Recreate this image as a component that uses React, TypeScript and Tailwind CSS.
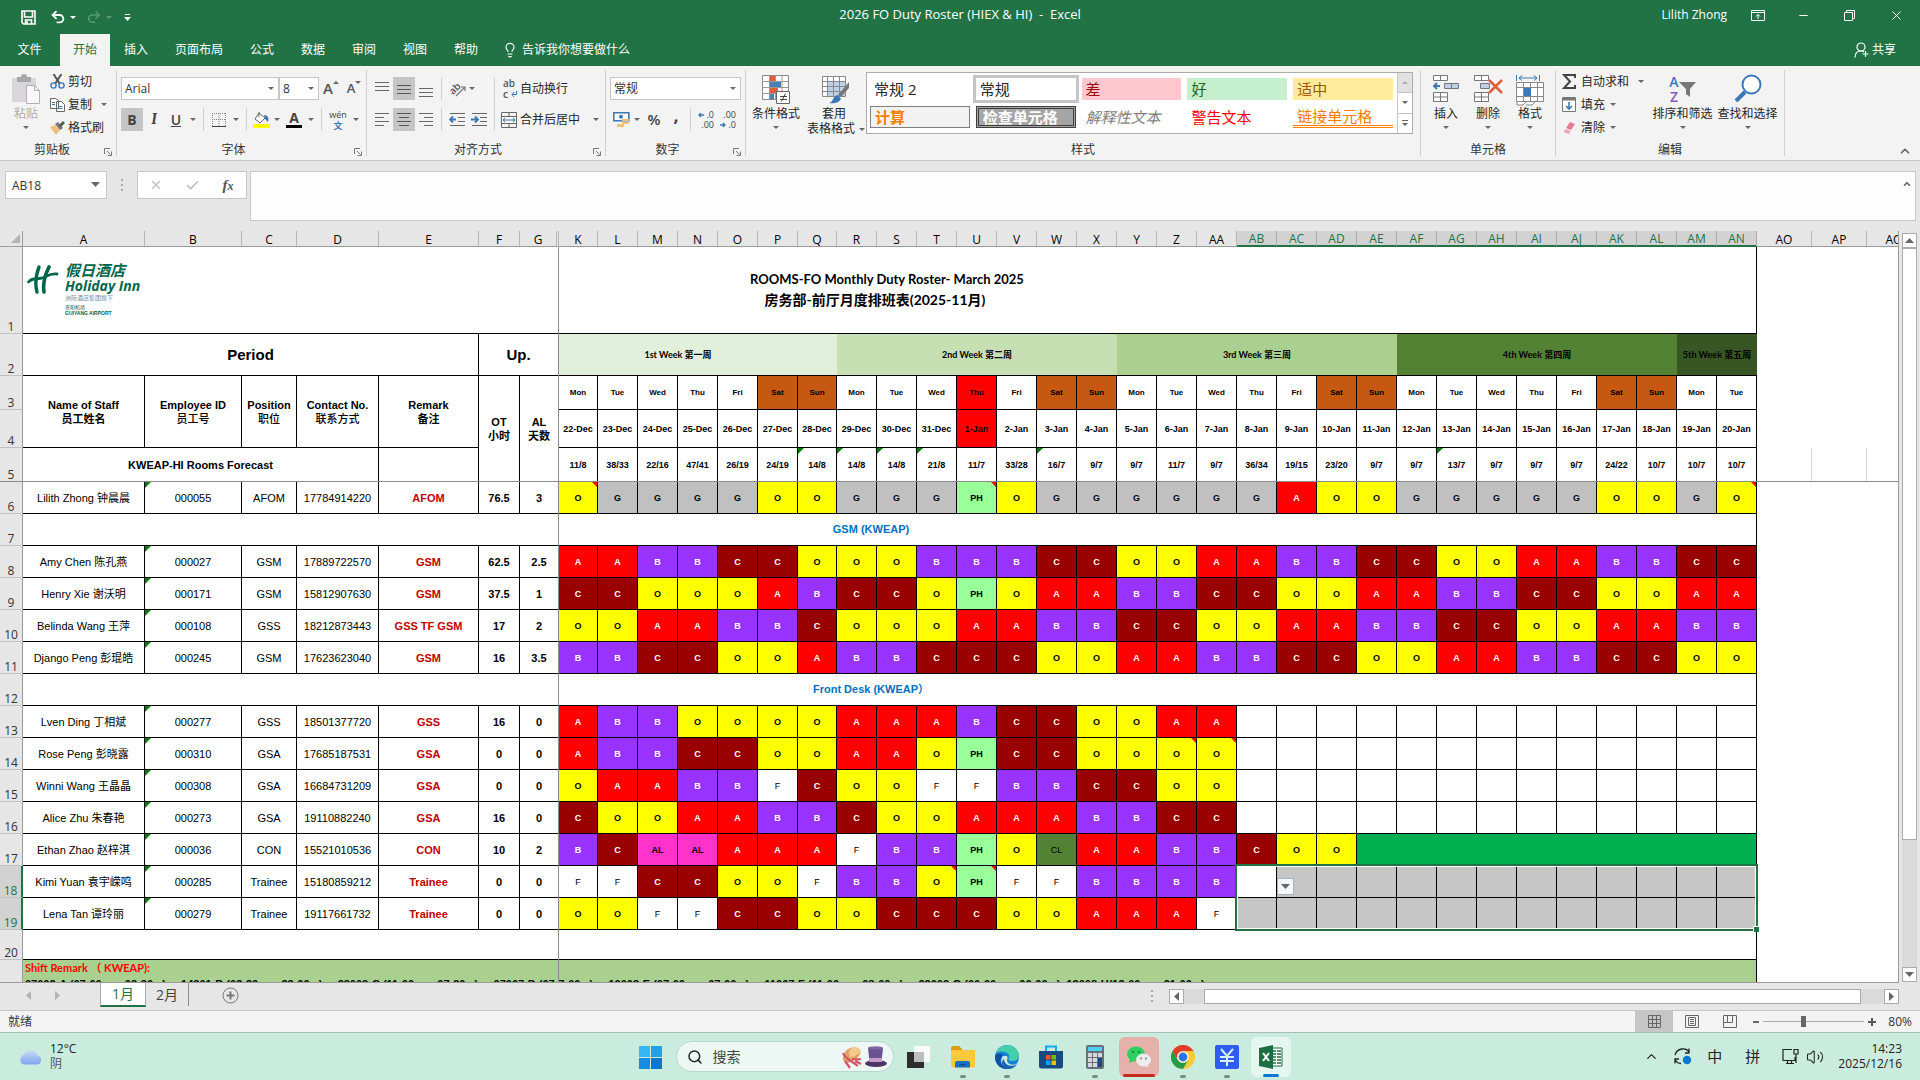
import React from 'react';
import { Undo2, Redo2, Minus, X, Lightbulb, ChevronUp, Search, Check, Volume2 } from 'lucide-react';

/* ---------- roster data ---------- */

const DAYS = ['Mon', 'Tue', 'Wed', 'Thu', 'Fri', 'Sat', 'Sun'];

const DATES = [
  '22-Dec', '23-Dec', '24-Dec', '25-Dec', '26-Dec', '27-Dec', '28-Dec', '29-Dec', '30-Dec', '31-Dec',
  '1-Jan', '2-Jan', '3-Jan', '4-Jan', '5-Jan', '6-Jan', '7-Jan', '8-Jan', '9-Jan', '10-Jan',
  '11-Jan', '12-Jan', '13-Jan', '14-Jan', '15-Jan', '16-Jan', '17-Jan', '18-Jan', '19-Jan', '20-Jan',
];

const FORECAST =
  '11/8 38/33 22/16 47/41 26/19 24/19 14/8 14/8 14/8 21/8 11/7 33/28 16/7 9/7 9/7 11/7 9/7 36/34 19/15 23/20 9/7 9/7 13/7 9/7 9/7 9/7 24/22 10/7 10/7 10/7'.split(' ');
const FORECAST_FLAGS = [6, 7, 8, 9, 12, 22];

const COLUMNS =
  'A B C D E F G K L M N O P Q R S T U V W X Y Z AA AB AC AD AE AF AG AH AI AJ AK AL AM AN AO AP AQ'.split(' ');

interface Staff {
  row: number;
  name: string;
  id: string;
  position: string;
  phone: string;
  remark: string;
  ot: string;
  al: string;
  shifts: string;
  notes?: number[];
}

const AFOM: Staff[] = [
  { row: 6, name: 'Lilith Zhong 钟晨晨', id: '000055', position: 'AFOM', phone: '17784914220', remark: 'AFOM', ot: '76.5', al: '3', shifts: 'O G G G G O O G G G PH O G G G G G G A O O G G G G G O O G O', notes: [0, 10, 29] },
];

const GSM: Staff[] = [
  { row: 8, name: 'Amy Chen 陈孔燕', id: '000027', position: 'GSM', phone: '17889722570', remark: 'GSM', ot: '62.5', al: '2.5', shifts: 'A A B B C C O O O B B B C C O O A A B B C C O O A A B B C C' },
  { row: 9, name: 'Henry Xie 谢沃明', id: '000171', position: 'GSM', phone: '15812907630', remark: 'GSM', ot: '37.5', al: '1', shifts: 'C C O O O A B C C O PH O A A B B C C O O A A B B C C O O A A' },
  { row: 10, name: 'Belinda Wang 王萍', id: '000108', position: 'GSS', phone: '18212873443', remark: 'GSS TF GSM', ot: '17', al: '2', shifts: 'O O A A B B C O O O A A B B C C O O A A B B C C O O A A B B' },
  { row: 11, name: 'Django Peng 彭琨皓', id: '000245', position: 'GSM', phone: '17623623040', remark: 'GSM', ot: '16', al: '3.5', shifts: 'B B C C O O A B B C C C O O A A B B C C O O A A B B C C O O' },
];

const FRONT_DESK: Staff[] = [
  { row: 13, name: 'Lven Ding 丁相斌', id: '000277', position: 'GSS', phone: '18501377720', remark: 'GSS', ot: '16', al: '0', shifts: 'A B B O O O O A A A B C C O O A A - - - - - - - - - - - - -' },
  { row: 14, name: 'Rose Peng 彭晓露', id: '000310', position: 'GSA', phone: '17685187531', remark: 'GSA', ot: '0', al: '0', shifts: 'A B B C C O O A A O PH C C O O O O - - - - - - - - - - - - -', notes: [15, 16] },
  { row: 15, name: 'Winni Wang 王晶晶', id: '000308', position: 'GSA', phone: '16684731209', remark: 'GSA', ot: '0', al: '0', shifts: 'O A A B B F C O O F F B B C C O O - - - - - - - - - - - - -' },
  { row: 16, name: 'Alice Zhu 朱春艳', id: '000273', position: 'GSA', phone: '19110882240', remark: 'GSA', ot: '16', al: '0', shifts: 'C O O A A B B C O O A A A B B C C - - - - - - - - - - - - -' },
  { row: 17, name: 'Ethan Zhao 赵梓淇', id: '000036', position: 'CON', phone: '15521010536', remark: 'CON', ot: '10', al: '2', shifts: 'B C AL AL A A A F B B PH O CL A A B B C O O END' },
  { row: 18, name: 'Kimi Yuan 袁宇嵘鸣', id: '000285', position: 'Trainee', phone: '15180859212', remark: 'Trainee', ot: '0', al: '0', shifts: 'F F C C O O F B B O PH F F B B B B ACTIVE S S S S S S S S S S S S', notes: [9, 10] },
  { row: 19, name: 'Lena Tan 谭玲丽', id: '000279', position: 'Trainee', phone: '19117661732', remark: 'Trainee', ot: '0', al: '0', shifts: 'O O F F C C O O C C C O O A A A F S S S S S S S S S S S S S' },
];

const SHIFT_STYLE: Record<string, string> = {
  A: 'bg-[#ff0000] text-white font-bold',
  B: 'bg-[#9933ff] text-white font-bold',
  C: 'bg-[#990000] text-white font-bold',
  O: 'bg-[#ffff00] font-bold',
  G: 'bg-[#c0c0c0] font-bold',
  PH: 'bg-[#99ff99] font-bold',
  AL: 'bg-[#ff33cc] font-bold',
  CL: 'bg-[#548235]',
  F: '',
  S: 'bg-[#c6c6c6]',
};

const WEEKS = [
  { label: '1st Week 第一周', span: 7, style: 'bg-[#e2efda] pr-10' },
  { label: '2nd Week 第二周', span: 7, style: 'bg-[#c6e0b4]' },
  { label: '3rd Week 第三周', span: 7, style: 'bg-[#a9d08e]' },
  { label: '4th Week 第四周', span: 7, style: 'bg-[#548235]' },
  { label: '5th Week 第五周', span: 2, style: 'bg-[#375623]' },
];

const CELL = 'border-r border-b border-black p-0 text-center';

/* ---------- small shared pieces ---------- */

const Caret = ({ className = '', big }: { className?: string; big?: boolean }) => (
  <svg viewBox="0 0 6 3" className={`shrink-0 ${big ? 'h-[5px] w-[9px]' : 'h-[3px] w-[6px]'} ${className}`} fill="#666" preserveAspectRatio="none" aria-hidden="true">
    <path d="M0 0h6L3 3z" />
  </svg>
);

const ArrowButton = ({ label, className = 'w-3' }: { label: string; className?: string }) => (
  <button aria-label={label} className={`flex h-[23px] items-center justify-center ${className}`}>
    <Caret />
  </button>
);

const Sep = ({ className = 'h-[23px] mx-1' }: { className?: string }) => (
  <div className={`w-px shrink-0 bg-[#d0d0d0] ${className}`} />
);

const Launcher = () => (
  <svg viewBox="0 0 8 8" className="absolute right-1 bottom-0 h-2 w-2" fill="none" stroke="#777" aria-hidden="true">
    <path d="M.5 6V.5H6M3 3l3.500 3.500M7.500 3.500v4h-4" />
  </svg>
);

interface GroupProps {
  label: string;
  width: string;
  launcher?: boolean;
  children: React.ReactNode;
}

const Group: React.FC<GroupProps> = ({ label, width, launcher, children }) => (
  <section className={`relative my-1 flex shrink-0 flex-col border-r border-[#d0d0d0] ${width}`}>
    <div className="min-h-0 flex-1">{children}</div>
    <div className="h-3 text-center leading-3 text-[#333]">{label}</div>
    {launcher && <Launcher />}
  </section>
);

const IconButton = ({ label, active, className = 'w-[22px]', children }: any) => (
  <button
    aria-label={label}
    className={`flex h-[23px] shrink-0 items-center justify-center ${active ? 'bg-[#c5c5c5]' : ''} ${className}`}
  >
    {children}
  </button>
);

const LineIcon = ({ d, color = '#666' }: { d: string; color?: string }) => (
  <svg viewBox="0 0 16 16" className="h-4 w-4" stroke={color} aria-hidden="true">
    <path d={d} />
  </svg>
);

const IndentIcon = ({ right }: { right?: boolean }) => (
  <svg viewBox="0 0 17 14" className="h-[14px] w-[17px]" fill="none" stroke="#666" aria-hidden="true">
    <path d="M1 .5h15M9 4.500h7M9 8.500h7M1 12.500h15" />
    <path d={right ? 'M0 6.500h7M4 3.500l3 3-3 3' : 'M7 6.500H1M4 3.500l-3 3 3 3'} stroke="#3b78b5" strokeWidth="1.800" />
  </svg>
);

const SelectBox = ({ label, value, className }: { label: string; value: string; className: string }) => (
  <div className={`relative flex h-[23px] items-center border border-[#c6c6c6] bg-white ${className}`}>
    <select aria-label={label} defaultValue={value} className="h-full w-full appearance-none pl-[3px] text-[#333]">
      <option>{value}</option>
    </select>
    <Caret className="absolute right-1" />
  </div>
);

const BigButton = ({ label, className, children }: any) => (
  <button className={`flex flex-col items-center pt-1 ${className}`}>
    <span className="flex h-8 items-start">{children}</span>
    <span className="leading-4 whitespace-nowrap">{label}</span>
    <Caret className="mt-1" />
  </button>
);

/* ---------- title bar, tabs ---------- */

const TitleBar = () => (
  <header className="flex h-[34px] shrink-0 items-center bg-[#217346] px-4 pb-1 text-white">
    <div className="flex flex-1 items-center pt-1">
      <button aria-label="保存" className="ml-[5px]">
        <svg viewBox="0 0 15 15" className="h-[15px] w-[15px]" fill="none" stroke="#fff" strokeWidth="1.600">
          <path d="M1 1h13v13H2.500L1 12.500zM3.500 1v6h8V1M4.500 14v-4h6v4" /><path d="M6 11v3" />
        </svg>
      </button>
      <button aria-label="撤消" className="ml-3.5"><Undo2 size={16} strokeWidth={2.8} /></button>
      <svg viewBox="0 0 6 3" className="ml-1 h-[3px] w-[6px]" fill="#fff"><path d="M0 0h6L3 3z" /></svg>
      <button aria-label="恢复" className="ml-2.5 text-[#5a9a78]"><Redo2 size={16} strokeWidth={2.2} /></button>
      <svg viewBox="0 0 6 3" className="ml-1 h-[3px] w-[6px]" fill="#5a9a78"><path d="M0 0h6L3 3z" /></svg>
      <svg viewBox="0 0 7 7" className="ml-3 h-[7px] w-[7px]" fill="#fff"><path d="M1 0h5v1H1zM0 3h7L3.500 7z" /></svg>
    </div>
    <h1 className="text-[13px] whitespace-pre">2026 FO Duty Roster (HIEX &amp; HI)  -  Excel</h1>
    <div className="flex flex-1 items-center justify-end">
      <span className="mr-6">Lilith Zhong</span>
      <button aria-label="功能区显示选项" className="mr-8">
        <svg viewBox="0 0 14 11" className="h-[11px] w-[14px]" fill="none" stroke="#fff">
          <path d="M.5 .5h13v10H.5zM.5 2.500h13M7 9V4.500M5 6.500l2-2 2 2" />
        </svg>
      </button>
      <button aria-label="最小化" className="mr-[34px]"><Minus size={13} strokeWidth={2} /></button>
      <button aria-label="还原" className="mr-[34px]">
        <svg viewBox="0 0 11 11" className="h-[11px] w-[11px]" fill="none" stroke="#fff"><path d="M.5 2.500h8v8h-8zM2.500 2.500v-2h8v8h-2" /></svg>
      </button>
      <button aria-label="关闭"><X size={15} strokeWidth={1.6} /></button>
    </div>
  </header>
);

const TABS = ['插入', '页面布局', '公式', '数据', '审阅', '视图', '帮助'];

const RibbonTabs = () => (
  <nav className="flex h-8 shrink-0 items-stretch gap-px bg-[#217346] text-white">
    <button className="w-[59px]">文件</button>
    <button className="w-[50px] bg-[#f3f3f3] text-[#217346]">开始</button>
    {TABS.map((t) => (
      <button key={t} className="px-[13px]">{t}</button>
    ))}
    <button className="ml-2.5 flex items-center gap-1"><Lightbulb size={16} strokeWidth={1.7} />告诉我你想要做什么</button>
    <button className="mr-6 ml-auto flex items-center gap-[3px]">
      <svg viewBox="0 0 15 16" className="h-4 w-[15px]" fill="none" stroke="#fff" strokeWidth="1.200"><circle cx="7" cy="5" r="4" /><path d="M1 15.500C1 11.500 3 9 7 9c1.500 0 2.500.5 3 1M11.500 9v6M8.500 12h6" /></svg>
      共享
    </button>
  </nav>
);

/* ---------- ribbon ---------- */

const ClipboardGroup = () => (
  <Group label="剪贴板" width="w-[117px] pl-1 pr-4" launcher>
    <div className="-mr-4 flex">
      <BigButton label="粘贴" className="w-[44px] text-[#b0b0b0]">
        <svg viewBox="0 0 28 30" className="h-[30px] w-7" aria-hidden="true">
          <path d="M0 4h24v24H0z" fill="#d9d5dc" />
          <path d="M5 3h4a3 3 0 016 0h4v5H5z" fill="#a8a8a8" />
          <path d="M14.500 11.500h8l5 5v13h-13z" fill="#faf7fb" stroke="#b5b0b8" />
          <path d="M22.500 11.500v5h5" fill="none" stroke="#b5b0b8" />
        </svg>
      </BigButton>
      <div className="pl-0.5">
        <button className="flex h-[23px] items-center gap-[3px]">
          <svg viewBox="0 0 15 15" className="h-[15px] w-[15px]" fill="none" aria-hidden="true">
            <path d="M3.500 0L10 10M11.500 0L5 10" stroke="#555" strokeWidth="2" />
            <circle cx="3.500" cy="11.500" r="2.600" stroke="#3b78b5" strokeWidth="1.400" /><circle cx="11.500" cy="11.500" r="2.600" stroke="#3b78b5" strokeWidth="1.400" />
          </svg>
          剪切
        </button>
        <button className="flex h-[23px] items-center gap-[3px]">
          <svg viewBox="0 0 15 14" className="h-[14px] w-[15px]" fill="#fff" stroke="#666" aria-hidden="true">
            <path d="M.5 .5h5l3 2v8h-8zM6.500 3.500h5l3 3v7h-8z" />
            <path d="M2 4.500h3M2 6.500h3M8.500 8.500h4M8.500 10.500h4" stroke="#3b78b5" />
          </svg>
          复制<Caret className="ml-1.5" />
        </button>
        <button className="flex h-[23px] items-center gap-[3px]">
          <svg viewBox="0 0 15 14" className="h-[14px] w-[15px]" aria-hidden="true">
            <path d="M0 6l5-2 5 5-4 5z" fill="#eec07b" /><path d="M5 3l3-2 5 6-3 2z" fill="#777" /><path d="M9 4l4-4 2 2-4 4z" fill="#555" />
          </svg>
          格式刷
        </button>
      </div>
    </div>
  </Group>
);

const FontGroup = () => (
  <Group label="字体" width="w-[250px] pr-4" launcher>
    <div className="-mr-4 pt-[7px] pl-1">
      <div className="flex items-center">
        <SelectBox label="字体名称" value="Arial" className="w-[158px]" />
        <SelectBox label="字号" value="8" className="w-10" />
        <IconButton label="增大字号" className="w-6"><span className="text-[15px] font-semibold text-[#555]">A</span><Caret className="mb-3 rotate-180" /></IconButton>
        <IconButton label="减小字号"><span className="text-[13px] font-semibold text-[#555]">A</span><Caret className="mb-3" /></IconButton>
      </div>
      <div className="mt-2 flex items-center text-[14px] text-[#444]">
        <IconButton label="加粗" active><b>B</b></IconButton>
        <IconButton label="倾斜"><i className="font-serif text-[15px] font-bold">I</i></IconButton>
        <IconButton label="下划线"><span className="font-semibold underline">U</span></IconButton>
        <ArrowButton label="下划线样式" />
        <Sep />
        <IconButton label="边框">
          <svg viewBox="0 0 14 14" className="h-[14px] w-[14px]" fill="none" stroke="#888" strokeDasharray="1 1" aria-hidden="true">
            <path d="M.5 0v13M7 0v13M13.500 0v13M0 .5h14M0 6.500h14" /><path d="M0 13.500h14" stroke="#444" strokeDasharray="none" />
          </svg>
        </IconButton>
        <ArrowButton label="边框样式" />
        <Sep />
        <IconButton label="填充颜色" className="w-5">
          <svg viewBox="0 0 17 17" className="h-[17px] w-[17px]" aria-hidden="true">
            <path d="M6 2l6 5-5 5-5-4z" fill="#fff" stroke="#666" /><path d="M6 1v5" stroke="#666" /><path d="M11 4c4 0 5 3 4 7l-3-3z" fill="#3b78b5" />
            <path d="M0 13h17v4H0z" fill="#ff0" />
          </svg>
        </IconButton>
        <ArrowButton label="填充颜色选项" />
        <IconButton label="字体颜色">
          <span className="flex flex-col items-center"><b className="text-[14px] leading-[14px]">A</b><span className="h-[3px] w-4 bg-black" /></span>
        </IconButton>
        <ArrowButton label="字体颜色选项" />
        <Sep />
        <IconButton label="拼音" className="w-6">
          <span className="flex flex-col items-center"><span className="text-[9px] leading-[11px]">wén</span><b className="text-[9px] leading-[11px] text-[#3b78b5]">文</b></span>
        </IconButton>
        <ArrowButton label="拼音选项" />
      </div>
    </div>
  </Group>
);

const AlignGroup = () => (
  <Group label="对齐方式" width="w-[239px] pr-4" launcher>
    <div className="-mr-4 flex pt-[7px] pl-1">
      <div>
        <div className="flex">
          <IconButton label="顶端对齐"><LineIcon d="M1 1.500h14M1 5.500h14M1 9.500h14" /></IconButton>
          <IconButton label="垂直居中" active><LineIcon d="M1 4.500h14M1 8.500h14M1 12.500h14" color="#555" /></IconButton>
          <IconButton label="底端对齐"><LineIcon d="M1 7.500h14M1 11.500h14M1 15.500h14" /></IconButton>
          <Sep />
          <IconButton label="方向">
            <svg viewBox="0 0 17 18" className="h-[18px] w-[17px] overflow-visible" aria-hidden="true">
              <text x="0" y="12" fontSize="10" fontWeight="600" transform="rotate(-45 6 9)" fill="#555" fontFamily="Open Sans">ab</text>
              <path d="M7 16l9-9M16 11V7h-4" fill="none" stroke="#777" strokeWidth="1.200" />
            </svg>
          </IconButton>
          <ArrowButton label="方向选项" className="w-2" />
        </div>
        <div className="mt-2 flex">
          <IconButton label="左对齐"><LineIcon d="M1 1.500h14M1 5.500h9M1 9.500h14M1 13.500h9" /></IconButton>
          <IconButton label="居中" active><LineIcon d="M1 1.500h14M3 5.500h10M1 9.500h14M3 13.500h10" color="#555" /></IconButton>
          <IconButton label="右对齐"><LineIcon d="M1 1.500h14M6 5.500h9M1 9.500h14M6 13.500h9" /></IconButton>
          <Sep />
          <IconButton label="减少缩进"><IndentIcon /></IconButton>
          <IconButton label="增加缩进"><IndentIcon right /></IconButton>
        </div>
      </div>
      <Sep className="mx-1 h-[54px]" />
      <div className="pl-0.5">
        <button className="flex h-[23px] items-center gap-[3px]">
          <span className="relative flex h-[22px] w-4 flex-col pl-0.5 text-left text-[10px] font-semibold text-[#555]">
            <span className="leading-[11px]">ab</span>
            <span className="leading-[11px]">c</span>
            <svg viewBox="0 0 6 6" className="absolute right-0 bottom-[3px] h-1.5 w-1.5" fill="none" stroke="#3b78b5" aria-hidden="true"><path d="M5.500 0v3.500H1M3 1L1 3.500 3 6" /></svg>
          </span>
          自动换行
        </button>
        <button className="mt-2 flex h-[23px] items-center gap-[3px]">
          <svg viewBox="0 0 16 16" className="h-4 w-4" fill="none" stroke="#666" aria-hidden="true">
            <path d="M.5 .5h15v15H.5zM.5 4.500h15M.5 11.500h15M8 .5v4M8 11.500v4" />
            <path d="M2 8h12M4 6L2 8l2 2M12 6l2 2-2 2" stroke="#3b78b5" />
          </svg>
          合并后居中<Caret className="ml-2.5" />
        </button>
      </div>
    </div>
  </Group>
);

const Decimals = ({ first, second, left }: { first: string; second: string; left?: boolean }) => (
  <span className="relative flex h-5 w-4 flex-col text-right text-[9px] leading-[10px]">
    <span>{first}</span>
    <span>{second}</span>
    <svg viewBox="0 0 7 6" className={`absolute left-0 h-1.5 w-[7px] ${left ? 'top-0.5' : 'bottom-0.5'}`} fill="none" stroke="#3b78b5" strokeWidth="1.300" aria-hidden="true">
      <path d={left ? 'M6 3H1M3 1L1 3l2 2' : 'M0 3h5M3 1l2 2-2 2'} />
    </svg>
  </span>
);

const NumberGroup = () => (
  <Group label="数字" width="w-[140px] pr-4" launcher>
    <div className="-mr-4 pt-[7px] pl-1">
      <SelectBox label="数字格式" value="常规" className="w-[131px]" />
      <div className="mt-2 flex items-center text-[#444]">
        <IconButton label="会计数字格式">
          <svg viewBox="0 0 17 16" className="h-4 w-[17px]" aria-hidden="true">
            <path d="M.8 .8h15v8H.8z" fill="#fff" stroke="#3b78b5" strokeWidth="1.600" /><circle cx="8" cy="4.800" r="2" fill="#3b78b5" />
            <path d="M9 7h7v2H9zM9 10h7v2H9zM4 12h7v3H4z" fill="#eec07b" />
          </svg>
        </IconButton>
        <ArrowButton label="会计选项" className="w-2.5" />
        <IconButton label="百分比样式" className="w-6"><span className="text-[15px] font-semibold">%</span></IconButton>
        <IconButton label="千位分隔样式" className="w-5"><b className="mb-2 text-[18px]">,</b></IconButton>
        <Sep className="mx-1 h-[23px]" />
        <IconButton label="增加小数位数"><Decimals first=".0" second=".00" left /></IconButton>
        <IconButton label="减少小数位数"><Decimals first=".00" second=".0" /></IconButton>
      </div>
    </div>
  </Group>
);

const GALLERY = [
  { label: '常规 2', style: '' },
  { label: '常规', style: 'outline-[3px] outline-[#c5c5c5]' },
  { label: '差', style: 'bg-[#ffc7ce] text-[#9c0006]' },
  { label: '好', style: 'bg-[#c6efce] text-[#276221]' },
  { label: '适中', style: 'bg-[#ffeb9c] text-[#9c5700]' },
  { label: '计算', style: 'border border-[#7f7f7f] bg-[#f2f2f2] font-bold text-[#fa7d00]' },
  { label: '检查单元格', style: 'border-3 border-double border-[#3f3f3f] bg-[#a5a5a5] font-bold text-white' },
  { label: '解释性文本', style: 'italic text-[#7f7f7f]' },
  { label: '警告文本', style: 'text-[#ff0000]' },
  { label: '链接单元格', style: 'border-b-3 border-double border-[#ff8001] text-[#fa7d00]' },
];

const StylesGroup = () => (
  <Group label="样式" width="w-[675px]">
    <div className="flex">
      <BigButton label="条件格式" className="w-[60px]">
        <svg viewBox="0 0 30 30" className="h-[30px] w-[30px]" fill="none" aria-hidden="true">
          <path d="M1.500 1.500h26v24h-26z" fill="#fff" stroke="#888" />
          <path d="M1 7.500h26M1 13.500h26M1 19.500h26M8.500 1v24M14.500 1v24M21 1v24" stroke="#999" />
          <path d="M9 2h5v5H9zM9 14h8v5H9z" fill="#d9603b" /><path d="M9 8h11v5H9zM9 20h4v5H9z" fill="#4a80b8" />
          <path d="M15.500 17.500h13v12h-13z" fill="#fff" stroke="#666" /><path d="M19 22.500h7M19 25.500h7M24.500 19.500l-4 8" stroke="#444" />
        </svg>
      </BigButton>
      <button className="flex w-[60px] flex-col items-center pt-1">
        <span className="flex h-8 items-start">
          <svg viewBox="0 0 30 30" className="h-[30px] w-[30px]" fill="none" aria-hidden="true">
            <path d="M1.500 2.500h23v20h-23z" fill="#fff" stroke="#888" />
            <path d="M7 8h17v14H7z" fill="#bdd0e8" />
            <path d="M1 7.500h23M1 12.500h23M1 17.500h23M6.500 2v20M12.500 2v20M18.500 2v20" stroke="#888" />
            <path d="M28 8v6l-8 9-3-2z" fill="#777" /><path d="M8 29c5-1 3-7 9-8l3 4c-2 4-7 5-12 4z" fill="#3b78b5" />
          </svg>
        </span>
        <span className="pr-1 leading-4">套用</span>
        <span className="flex items-center gap-1 leading-[14px] whitespace-nowrap">表格格式<Caret /></span>
      </button>
      <div className="mt-0.5 flex h-[62px] w-[547px] border border-[#ababab] bg-white">
        <div className="grid flex-1 grid-cols-5 gap-x-1.5 gap-y-1.5 py-[5px] pr-1 pl-[3px] text-[15px]">
          {GALLERY.map((g) => (
            <button key={g.label} className={`flex h-[22px] items-center px-1 leading-4 whitespace-nowrap ${g.style}`}>{g.label}</button>
          ))}
        </div>
        <div className="flex w-[15px] flex-col border-l border-[#c6c6c6]">
          <button aria-label="上一行" className="flex flex-1 items-center justify-center bg-[#e1e1e1]"><Caret className="rotate-180 opacity-40" /></button>
          <button aria-label="下一行" className="flex flex-1 items-center justify-center border-y border-[#c6c6c6]"><Caret /></button>
          <button aria-label="其他" className="flex flex-1 flex-col items-center justify-center gap-0.5"><span className="h-px w-1.5 bg-[#666]" /><Caret /></button>
        </div>
      </div>
    </div>
  </Group>
);

const CellsGroup = () => (
  <Group label="单元格" width="w-[135px]">
    <div className="flex justify-center">
      <BigButton label="插入" className="w-[42px]">
        <svg viewBox="0 0 28 28" className="h-7 w-7" fill="#fff" stroke="#777" aria-hidden="true">
          <path d="M1.500 1.500h14v5h-14zM8.500 1.500v5M1.500 18.500h14v9h-14zM8.500 18.500v9M1.500 23h14" />
          <path d="M12.500 9.500h14v5h-14zM19.500 9.500v5" fill="#bdd0e8" /><path d="M8 12H2M5 9l-3 3 3 3" fill="none" stroke="#3b78b5" strokeWidth="2" />
        </svg>
      </BigButton>
      <BigButton label="删除" className="w-[42px]">
        <svg viewBox="0 0 30 28" className="h-7 w-[30px]" fill="#fff" stroke="#777" aria-hidden="true">
          <path d="M1.500 1.500h14v5h-14zM8.500 1.500v5M1.500 18.500h14v9h-14zM8.500 18.500v9M1.500 23h14" /><path d="M7.500 9.500h9v5h-9z" fill="#bdd0e8" />
          <path d="M16 6l13 13M29 6L16 19" stroke="#d9603b" strokeWidth="2.500" />
        </svg>
      </BigButton>
      <BigButton label="格式" className="w-[42px]">
        <svg viewBox="0 0 28 32" className="h-8 w-7" fill="#fff" stroke="#888" aria-hidden="true">
          <path d="M.5 8.500h27v19H.5zM.5 13.500h27M.5 22.500h27M7.500 8.500v19M14.500 8.500v19M21.500 8.500v19M1 28v3h6l3-3M10 31h6l3-3" />
          <path d="M8 14h7v8H8z" fill="#3b78b5" stroke="none" />
          <path d="M.5 1v6M23.500 1v6M3 4h18M6 1.500L3 4l3 2.500M18 1.500L21 4l-3 2.500" fill="none" stroke="#3b78b5" />
        </svg>
      </BigButton>
    </div>
  </Group>
);

const EditGroup = () => (
  <Group label="编辑" width="w-[229px]">
    <div className="flex pl-1.5">
      <div className="w-[88px]">
        <button className="flex h-[23px] items-center gap-[5px]">
          <svg viewBox="0 0 14 15" className="h-[15px] w-[14px]" fill="none" stroke="#444" strokeWidth="2" aria-hidden="true"><path d="M13 4V1H2l6 6.500L2 14h11v-3" /></svg>
          自动求和<Caret className="ml-1" />
        </button>
        <button className="flex h-[23px] items-center gap-[5px]">
          <svg viewBox="0 0 14 15" className="h-[15px] w-[14px]" fill="#fff" stroke="#777" aria-hidden="true">
            <path d="M.5 .5h13v14H.5z" /><path d="M1 2h12" strokeWidth="3" /><path d="M7 5v7M4 9l3 3 3-3" fill="none" stroke="#3b78b5" strokeWidth="1.600" />
          </svg>
          填充<Caret />
        </button>
        <button className="flex h-[23px] items-center gap-[5px]">
          <svg viewBox="0 0 14 14" className="h-[14px] w-[14px]" aria-hidden="true"><path d="M8 1l5 2-4 6-5-2z" fill="#e5798f" /><path d="M3.500 8l5 2-2 3-5-2z" fill="#f0a3b3" /></svg>
          清除<Caret />
        </button>
      </div>
      <BigButton label="排序和筛选" className="w-[65px]">
        <span className="flex items-center">
          <span className="flex flex-col text-[14px] leading-[15px] font-semibold">
            <span className="text-[#3b78b5]">A</span>
            <span className="text-[#8e5bb5]">Z</span>
          </span>
          <svg viewBox="0 0 17 15" className="h-[15px] w-[17px]" fill="#777" aria-hidden="true"><path d="M0 0h17l-6 7v8l-4-3V7z" /></svg>
        </span>
      </BigButton>
      <BigButton label="查找和选择" className="w-[65px]">
        <svg viewBox="0 0 28 28" className="h-7 w-7" fill="#fff" stroke="#3b78b5" aria-hidden="true">
          <circle cx="17.500" cy="10.500" r="9" strokeWidth="2" /><path d="M11 18l-9 9" strokeWidth="4" />
        </svg>
      </BigButton>
    </div>
  </Group>
);

const Ribbon = () => (
  <div className="flex h-[95px] shrink-0 overflow-hidden border-b border-[#c8c8c8] bg-[#f3f3f3]">
    <ClipboardGroup />
    <FontGroup />
    <AlignGroup />
    <NumberGroup />
    <StylesGroup />
    <CellsGroup />
    <EditGroup />
    <button aria-label="折叠功能区" className="mr-2 mb-0.5 ml-auto self-end"><ChevronUp size={14} strokeWidth={3} color="#666" /></button>
  </div>
);

const FormulaBar = () => (
  <div className="flex shrink-0 items-start py-2.5 pr-1 pl-[5px]">
    <div className="relative h-7 w-[102px] border border-[#c6c6c6] bg-white">
      <input aria-label="名称框" defaultValue="AB18" className="h-full w-full pl-1.5 text-[#333]" />
      <Caret big className="absolute top-[10px] right-1.5" />
    </div>
    <div className="flex h-7 w-[30px] flex-col items-center justify-center gap-[3px]">
      <i className="h-0.5 w-0.5 bg-[#aaa]" /><i className="h-0.5 w-0.5 bg-[#aaa]" /><i className="h-0.5 w-0.5 bg-[#aaa]" />
    </div>
    <div className="flex h-7 w-[110px] items-center border border-[#c6c6c6] bg-white">
      <button aria-label="取消" className="flex w-9 justify-center"><X size={14} color="#c0c0c0" strokeWidth={2.4} /></button>
      <button aria-label="输入" className="flex w-9 justify-center"><Check size={15} color="#c0c0c0" strokeWidth={2.8} /></button>
      <button aria-label="插入函数" className="w-9 font-['Liberation_Serif'] text-[15px] leading-4 font-semibold text-[#555] italic">f<span className="text-[12px]">x</span></button>
    </div>
    <div className="relative ml-[3px] h-[50px] flex-1 border border-[#c6c6c6] bg-[#fdfdfd]">
      <textarea aria-label="编辑栏" className="block h-full w-full resize-none px-1" />
      <ChevronUp size={10} strokeWidth={4} color="#666" className="absolute top-[7px] right-[3px]" />
    </div>
  </div>
);

/* ---------- sheet ---------- */

const Logo = () => (
  <div className="flex gap-1.5 pb-0.5 pl-1">
    <svg viewBox="0 0 32 29" className="mt-[3px] h-[29px] w-8" fill="none" stroke="#00664a" strokeLinecap="round" aria-hidden="true">
      <path d="M12 2C9 10 7.500 18 10 27" strokeWidth="3.400" />
      <path d="M22 2c-4 8-6.500 16-5 25" strokeWidth="3.600" />
      <path d="M1.500 17c4-5 9-2 15-4.500C21 10.500 24 8 30 9" strokeWidth="2.800" />
    </svg>
    <div className="text-left whitespace-nowrap text-[#00664a]">
      <div className="text-[15px] leading-[17px] font-bold italic">假日酒店</div>
      <div className="font-['Open_Sans'] text-[14px] leading-[14px] font-bold italic">Holiday Inn</div>
      <div className="pt-px text-[6px] leading-[8px] text-[#888]">洲际酒店集团旗下</div>
      <div className="pt-0.5 text-[5px] leading-[6px]">贵阳机场</div>
      <div className="text-[5px] leading-[6px] font-bold">GUIYANG AIRPORT</div>
    </div>
  </div>
);

const RowHead = ({ n, selected }: { n: number | string; selected?: boolean }) => (
  <th
    scope="row"
    className={`border-b border-b-[#c0c0c0] p-0 align-bottom font-['Open_Sans'] text-[12px] leading-[13px] font-normal ${
      selected ? 'border-r-2 border-r-[#217346] bg-[#d2d2d2] text-[#217346]' : 'border-r border-r-[#9b9b9b] bg-[#e6e6e6] text-[#333]'
    }`}
  >
    {n}
  </th>
);

const ErrorFlag = () => <i className="absolute top-0 left-0 border-t-[6px] border-r-[6px] border-t-[#008000] border-r-transparent" />;
const NoteFlag = () => <i className="absolute top-0 right-0 border-t-[5px] border-l-[5px] border-t-[#ff0000] border-l-transparent" />;

const ActiveCell = () => (
  <td className={`relative ${CELL}`}>
    <div className="pointer-events-none absolute -top-0.5 -left-0.5 z-10 h-[67px] w-[523px] border-2 border-[#217346] shadow-[inset_0_0_0_1px_#fff]">
      <i className="absolute -right-[3px] -bottom-[3px] h-[6px] w-[6px] border-t border-l border-white bg-[#217346]" />
    </div>
    <button aria-label="选择班次" className="absolute top-3 left-10 z-20 flex h-[17px] w-[17px] items-center justify-center border border-[#a9b4be] bg-[#f5f8fb]">
      <Caret big />
    </button>
  </td>
);

const StaffRow = ({ s }: { s: Staff }) => (
  <tr className="h-8">
    <RowHead n={s.row} selected={s.row > 17} />
    <td className={CELL}>{s.name}</td>
    <td className={`relative ${CELL}`}><ErrorFlag />{s.id}</td>
    <td className={CELL}>{s.position}</td>
    <td className={CELL}>{s.phone}</td>
    <td className={`${CELL} font-bold text-[#c00000]`}>{s.remark}</td>
    <td className={`${CELL} font-bold`}>{s.ot}</td>
    <td className={`${CELL} font-bold`}>{s.al}</td>
    {s.shifts.split(' ').map((code, i) => {
      if (code === 'END') return <td key={i} colSpan={10} className={`${CELL} bg-[#00b050]`} />;
      if (code === 'ACTIVE') return <ActiveCell key={i} />;
      return (
        <td key={i} className={`relative ${CELL} text-[9px] ${SHIFT_STYLE[code] ?? ''}`}>
          {code === '-' || code === 'S' ? '' : code}
          {s.notes?.includes(i) && <NoteFlag />}
        </td>
      );
    })}
  </tr>
);

const SectionRow = ({ n, title, height = 'h-8' }: { n: number; title: string; height?: string }) => (
  <tr className={height}>
    <RowHead n={n} />
    <td colSpan={7} className="border-b border-black p-0" />
    <td colSpan={30} className="border-r border-b border-black p-0">
      <div className="w-[624px] pb-0.5 text-center font-bold text-[#0070c0]">{title}</div>
    </td>
  </tr>
);

const isWeekend = (i: number) => i % 7 > 4;

const Sheet = () => (
  <div className="relative min-w-0 flex-1 overflow-hidden border-r border-b border-[#9b9b9b] bg-white">
    <table className="w-[1922px] table-fixed border-separate border-spacing-0 font-['Liberation_Sans','Noto_Sans_CJK_SC',sans-serif] text-[11px] leading-[14px] text-black">
      <colgroup>
        <col className="w-[23px]" />
        <col className="w-[122px]" />
        <col className="w-[97px]" />
        <col className="w-[55px]" />
        <col className="w-[82px]" />
        <col className="w-[100px]" />
        <col className="w-[41px]" />
        <col className="w-[39px]" />
        <col className="w-[39px]" />
        <col span={5} className="w-10" />
        <col className="w-[39px]" />
        <col span={23} className="w-10" />
        <col span={3} className="w-[55px]" />
      </colgroup>
      <thead>
        <tr className="h-4 font-['Open_Sans'] text-[12px] leading-[13px]">
          <th className="border-r border-b border-[#9b9b9b] bg-[#e6e6e6] p-0" aria-label="全选">
            <svg viewBox="0 0 9 9" className="ml-[11px] h-[9px] w-[9px]" fill="#b3b3b3"><path d="M9 0v9H0z" /></svg>
          </th>
          {COLUMNS.map((c, i) => {
            const selected = i > 23 && i < 37;
            return (
              <th
                key={c}
                scope="col"
                className={`px-0 pb-0 font-normal ${c === 'G' ? 'border-r-3 border-double' : 'border-r'} ${
                  selected ? 'border-r-[#ababab] border-b-2 border-b-[#217346] bg-[#d2d2d2] pt-px text-[#217346]' : 'border-r-[#b5b5b5] border-b border-b-[#9b9b9b] bg-[#e6e6e6] pt-0.5'
                }`}
              >
                {c}
              </th>
            );
          })}
        </tr>
      </thead>
      <tbody>
        <tr className="h-[87px]">
          <RowHead n={1} />
          <td colSpan={7} className="border-b border-black p-0"><Logo /></td>
          <td colSpan={30} className="border-r border-b border-black p-0">
            <div className="w-[656px] text-center font-['Lato','Noto_Sans_CJK_SC',sans-serif] font-bold">
              <div className="text-[13px] leading-5">ROOMS-FO Monthly Duty Roster- March 2025</div>
              <div className="pr-6 text-[14px] leading-[22px]">房务部-前厅月度排班表(2025-11月)</div>
            </div>
          </td>
        </tr>
        <tr className="h-[42px] font-bold">
          <RowHead n={2} />
          <td colSpan={5} className={`${CELL} text-[15px]`}>Period</td>
          <td colSpan={2} className={`${CELL} text-[15px]`}>Up.</td>
          {WEEKS.map((w) => (
            <td key={w.label} colSpan={w.span} className={`border-b border-black p-0 text-center font-['Lato','Noto_Sans_CJK_SC',sans-serif] text-[9px] ${w.style}`}>
              {w.label}
            </td>
          ))}
        </tr>
        <tr className="h-[34px] font-bold">
          <RowHead n={3} />
          <td rowSpan={2} className={CELL}>Name of Staff<br />员工姓名</td>
          <td rowSpan={2} className={CELL}>Employee ID<br /><span className="font-medium">员工号</span></td>
          <td rowSpan={2} className={CELL}>Position<br /><span className="font-medium">职位</span></td>
          <td rowSpan={2} className={CELL}>Contact No.<br /><span className="font-medium">联系方式</span></td>
          <td rowSpan={2} className={CELL}>Remark<br />备注</td>
          <td rowSpan={3} className={CELL}>OT<br />小时</td>
          <td rowSpan={3} className={CELL}>AL<br />天数</td>
          {DATES.map((d, i) => (
            <td key={d} className={`${CELL} text-[8px] ${i === 10 ? 'bg-[#ff0000]' : isWeekend(i) ? 'bg-[#c65911]' : ''}`}>{DAYS[i % 7]}</td>
          ))}
        </tr>
        <tr className="h-[38px] font-bold">
          <RowHead n={4} />
          {DATES.map((d, i) => (
            <td key={d} className={`${CELL} text-[9px] ${i === 10 ? 'bg-[#ff0000]' : ''}`}>{d}</td>
          ))}
        </tr>
        <tr className="h-[34px] font-bold">
          <RowHead n={5} />
          <td colSpan={4} className={CELL}>KWEAP-HI Rooms Forecast</td>
          <td className={CELL} />
          {FORECAST.map((f, i) => (
            <td key={i} className={`relative ${CELL} text-[9px]`}>{FORECAST_FLAGS.includes(i) && <ErrorFlag />}{f}</td>
          ))}
          <td className="border-r border-[#d4d4d4] p-0" />
          <td className="border-r border-[#d4d4d4] p-0" />
          <td className="p-0" />
        </tr>
        {AFOM.map((s) => <StaffRow key={s.row} s={s} />)}
        <SectionRow n={7} title="GSM (KWEAP)" />
        {GSM.map((s) => <StaffRow key={s.row} s={s} />)}
        <SectionRow n={12} title="Front Desk (KWEAP）" />
        {FRONT_DESK.map((s) => <StaffRow key={s.row} s={s} />)}
        <SectionRow n={20} title="" height="h-[30px]" />
        <tr className="h-[60px]">
          <RowHead n="" />
          <td colSpan={37} className="border-r border-black bg-[#a9d08e] px-0.5 py-0 align-top font-bold whitespace-pre">
            <div className="h-4 font-['Lato','Noto_Sans_CJK_SC',sans-serif] text-[11px] leading-4 text-[#ff0000]">Shift Remark （ KWEAP):</div>
            <div className="leading-4">{'07003-A (07:00  —  03:30   )     14301-B (03:30  —  23:00   )     23003-C (11:00  —  07:30   )     07007-D (07:7:00   )     10003-E (07:00  —  07:00   )     11007-F (11:00  —  08:00   )     23003-G (00:00  —  06:00   )  13008-H(13:00  —  21:00   )'}</div>
          </td>
        </tr>
      </tbody>
    </table>
    {/* freeze pane lines */}
    <div className="absolute top-4 bottom-0 left-[558px] w-px bg-[#8c8c8c]" />
    <div className="absolute top-[250px] right-0 left-0 h-px bg-[#8c8c8c]" />
  </div>
);

const SCROLL_BTN = 'flex h-[15px] w-[15px] shrink-0 items-center justify-center border border-[#ababab] bg-white';

const VerticalScroll = () => (
  <div className="flex w-[21px] flex-col items-center pt-0.5 pb-px">
    <button aria-label="向上滚动" className={SCROLL_BTN}><Caret big className="rotate-180" /></button>
    <div className="flex w-[15px] flex-1 flex-col bg-[#dadada]">
      <div className="h-[592px] border border-[#ababab] bg-white" />
    </div>
    <button aria-label="向下滚动" className={SCROLL_BTN}><Caret big /></button>
  </div>
);

const SheetTabs = () => (
  <div className="flex h-7 shrink-0 items-start border-b border-[#c6c6c6] pr-[21px] text-[14px]">
    <div className="flex h-6 w-[100px] items-center gap-[20px] pl-6">
      <Caret big className="rotate-90 opacity-40" /><Caret big className="-rotate-90 opacity-40" />
    </div>
    <button className="h-6 w-[46px] border-x border-b-2 border-x-[#ababab] border-b-[#217346] bg-white leading-5 text-[#217346]">1月</button>
    <button className="h-[23px] w-[43px] border-r border-[#8c8c8c] leading-5 text-[#444]">2月</button>
    <button aria-label="新工作表" className="mt-1 ml-[33px]">
      <svg viewBox="0 0 17 17" className="h-[17px] w-[17px]" fill="none" stroke="#777"><circle cx="8.500" cy="8.500" r="7.500" /><path d="M8.500 4.500v8M4.500 8.500h8" strokeWidth="2" /></svg>
    </button>
    <div className="mt-[7px] mr-4 ml-auto flex flex-col gap-[3px]">
      <i className="h-0.5 w-0.5 bg-[#aaa]" /><i className="h-0.5 w-0.5 bg-[#aaa]" /><i className="h-0.5 w-0.5 bg-[#aaa]" />
    </div>
    <div className="mt-[6px] flex w-[730px] bg-[#dadada]">
      <button aria-label="向左滚动" className={SCROLL_BTN}><Caret big className="rotate-90" /></button>
      <div className="mr-[23px] ml-5 h-[15px] flex-1 border border-[#ababab] bg-white" />
      <button aria-label="向右滚动" className={SCROLL_BTN}><Caret big className="-rotate-90" /></button>
    </div>
  </div>
);

const StatusBar = () => (
  <footer className="flex h-[22px] shrink-0 items-center border-b border-[#a5bfb5] bg-[#f3f3f3] pr-2 pl-2 text-[#333]">
    <span className="flex-1">就绪</span>
    <button aria-label="普通" className="flex h-full w-[38px] items-center justify-center bg-[#c6c6c6]">
      <svg viewBox="0 0 13 13" className="h-[13px] w-[13px]" fill="none" stroke="#666"><path d="M.5 .5h12v12H.5zM.5 4.500h12M.5 8.500h12M4.500 .5v12M8.500 .5v12" /></svg>
    </button>
    <button aria-label="页面布局" className="flex h-full w-[38px] items-center justify-center">
      <svg viewBox="0 0 14 13" className="h-[13px] w-[14px]" fill="none" stroke="#666"><path d="M.5 .5h13v12H.5zM3.500 2.500h7v8h-7zM5 4.500h4M5 6.500h4M5 8.500h4" /></svg>
    </button>
    <button aria-label="分页预览" className="flex h-full w-[38px] items-center justify-center">
      <svg viewBox="0 0 14 13" className="h-[13px] w-[14px]" fill="none" stroke="#666"><path d="M.5 .5h13v12H.5zM4.500 .5v7M9.500 .5v7M.5 7.500h9" /></svg>
    </button>
    <button aria-label="缩小" className="ml-1 h-0.5 w-1.5 bg-[#666]" />
    <input
      type="range"
      aria-label="缩放"
      min={0}
      max={200}
      defaultValue={78}
      className="mx-1 h-[11px] w-[101px] appearance-none bg-[linear-gradient(#aaa,#aaa)] bg-[length:100%_1px] bg-center bg-no-repeat [&::-webkit-slider-thumb]:h-[11px] [&::-webkit-slider-thumb]:w-[5px] [&::-webkit-slider-thumb]:appearance-none [&::-webkit-slider-thumb]:bg-[#666]"
    />
    <button aria-label="放大">
      <svg viewBox="0 0 8 8" className="h-2 w-2" stroke="#555" strokeWidth="2"><path d="M4 0v8M0 4h8" /></svg>
    </button>
    <span className="ml-3">80%</span>
  </footer>
);

/* ---------- taskbar ---------- */

interface TaskProps {
  label: string;
  running?: boolean;
  className?: string;
  bar?: string;
  children: React.ReactNode;
}

const TaskIcon: React.FC<TaskProps> = ({ label, running, className = '', bar, children }) => (
  <button aria-label={label} className={`relative flex h-10 w-10 items-center justify-center rounded-md ${className}`}>
    {children}
    {running && <i className="absolute -bottom-px h-[3px] w-1.5 rounded-full bg-[#7a8f87]" />}
    {bar && <i className={`absolute bottom-0 h-[3px] rounded-full ${bar}`} />}
  </button>
);

const Taskbar = () => (
  <footer className="flex h-[47px] shrink-0 items-center bg-[#c9ecdf] pr-[18px] text-[#222]">
    <div className="flex flex-1 items-center gap-[7px] pl-[19px] leading-[15px]">
      <svg viewBox="0 0 24 16" className="h-4 w-6" aria-hidden="true">
        <defs><linearGradient id="cloud" x1="0" y1="0" x2="0" y2="1"><stop offset="0" stopColor="#c9dcfa" /><stop offset="1" stopColor="#7fa3ea" /></linearGradient></defs>
        <path d="M5 15.500a5 5 0 01-.5-9.500A7.500 7.500 0 0118.500 6 5 5 0 0119 15.500z" fill="url(#cloud)" />
      </svg>
      <div className="pb-0.5">12°C<br /><span className="text-[#555]">阴</span></div>
    </div>
    <div className="flex items-center gap-1">
      <TaskIcon label="开始">
        <svg viewBox="0 0 24 24" className="h-6 w-6"><path d="M0 1h11v11H0z" fill="#35b5f1" /><path d="M12 1h11v11H12z" fill="#1fa0e8" /><path d="M0 13h11v11H0z" fill="#168be0" /><path d="M12 13h11v11H12z" fill="#0a77d0" /></svg>
      </TaskIcon>
      <div className="mx-px flex h-[31px] w-[218px] items-center rounded-full border border-[#b5d9cc] bg-[#edf8f4] pl-2.5">
        <Search size={16} strokeWidth={2.2} />
        <input aria-label="搜索" placeholder="搜索" className="ml-2.5 w-[60px] flex-1 text-[14px] placeholder:text-[#444]" />
        <svg viewBox="0 0 48 24" className="mr-1 h-6 w-12" aria-hidden="true">
          <path d="M2 15C1 6 10 0 17 3c6 4 0 10-4 12-3 2-8 5-11 0z" fill="#e3a05e" /><path d="M8 6c3-6 12-4 11 2-3 1-7 5-10 5z" fill="#f4c98d" />
          <path d="M2 8c2 6 9 8 15 13M4 16l5 7M11 14c3 0 6 1 9 0M14 16l6 3" stroke="#d5526a" strokeWidth="2.200" fill="none" />
          <ellipse cx="35" cy="18.500" rx="11" ry="3.500" fill="#4a3566" /><path d="M27 3h15l-1.500 14h-12z" fill="#6a5290" /><path d="M28 13h13v4H28.500z" fill="#c79ad0" /><ellipse cx="34.500" cy="3" rx="7.500" ry="1.800" fill="#7e65a6" />
        </svg>
      </div>
      <TaskIcon label="任务视图">
        <svg viewBox="0 0 24 24" className="h-6 w-6"><path d="M0 7h17v16H0z" fill="#2d2d2d" /><path d="M7 1h16v16H7z" fill="#fafafa" /><path d="M7 7h10v10H7z" fill="#bdbdbd" /></svg>
      </TaskIcon>
      <TaskIcon label="文件资源管理器" running>
        <svg viewBox="0 0 24 24" className="h-6 w-6"><path d="M0 3a2 2 0 012-2h6l3 3v5H0z" fill="#dc9c0c" /><path d="M0 5h24v16a1.500 1.500 0 01-1.500 1.500h-21A1.500 1.500 0 010 21z" fill="#fcc83c" /><path d="M4 22.500V18a2 2 0 012-2h11a2 2 0 012 2v4.500z" fill="#1273c4" /><path d="M8 19h7v1.500H8z" fill="#0a4f92" /></svg>
      </TaskIcon>
      <TaskIcon label="Edge" running>
        <svg viewBox="0 0 24 24" className="h-6 w-6">
          <circle cx="12" cy="12" r="12" fill="#1683d8" /><path d="M1 8C4-2 22-3 24 10c0 4-3 6-7 6-3 0-4-1-3-3 1-3-1-5-4-6-4-1-7 0-9 1z" fill="#45cfa8" />
          <path d="M8 11c-4 5-1 12 6 13 4 0 7-2 9-6-4 3-10 2-11-2 0-2 1-3 0-5z" fill="#c9ecdf" /><path d="M8 10c-5 5-2 13 6 14-8 1-14-5-14-12 0-3 5-5 8-2z" fill="#0d4fa0" />
          <path d="M9 14c0 6 8 9 13 5-2 4-6 5-9 5-6-1-8-7-4-10z" fill="#1b62b4" />
        </svg>
      </TaskIcon>
      <TaskIcon label="Microsoft Store">
        <svg viewBox="0 0 24 24" className="h-6 w-6"><path d="M7 6V1.500h10V6" fill="none" stroke="#16a7ee" strokeWidth="2" /><path d="M0 6h24v15a2.500 2.500 0 01-2.500 2.500h-19A2.500 2.500 0 010 21z" fill="#174a80" /><path d="M7 10h4.500v4.500H7z" fill="#f25022" /><path d="M12.500 10H17v4.500h-4.500z" fill="#7fba00" /><path d="M7 15.500h4.500V20H7z" fill="#00a4ef" /><path d="M12.500 15.500H17V20h-4.500z" fill="#ffb900" /></svg>
      </TaskIcon>
      <TaskIcon label="计算器" running>
        <svg viewBox="0 0 18 24" className="h-6 w-[18px]"><rect width="18" height="24" rx="2" fill="#69707a" /><path d="M2 2h14v4H2z" fill="#4fd0f2" /><path d="M2 8h4v4H2zM7 8h4v4H7zM12 8h4v4h-4zM2 13h4v4H2zM7 13h4v4H7zM2 18h4v4H2zM7 18h4v4H7z" fill="#d5d8dd" /><path d="M12 13h4v9h-4z" fill="#174a80" /></svg>
      </TaskIcon>
      <TaskIcon label="微信" className="bg-[#e6b0ab]" bar="w-8 bg-[#c42b1c]">
        <svg viewBox="0 0 24 22" className="h-[22px] w-6"><ellipse cx="9" cy="8" rx="9" ry="7.500" fill="#2ed05f" /><path d="M3 13l-1 4 5-2z" fill="#2ed05f" /><ellipse cx="16.500" cy="14" rx="7.500" ry="6.500" fill="#ececec" /><path d="M20 18l2 3-5-1z" fill="#ececec" /><g fill="#1c7a3c"><circle cx="6" cy="6" r="1" /><circle cx="12" cy="6" r="1" /></g><g fill="#777"><circle cx="14" cy="12.500" r=".9" /><circle cx="19" cy="12.500" r=".9" /></g></svg>
      </TaskIcon>
      <TaskIcon label="Chrome" running>
        <svg viewBox="0 0 24 24" className="h-6 w-6"><circle cx="12" cy="12" r="12" fill="#fcc934" /><path d="M1.600 6A12 12 0 0122.400 6H12a6 6 0 00-5.200 9z" fill="#e33b2e" /><path d="M1.600 6A12 12 0 0012 24l5.200-9A6 6 0 016.800 15z" fill="#239c4b" /><circle cx="12" cy="12" r="5.600" fill="#fff" /><circle cx="12" cy="12" r="4.400" fill="#2b73e8" /></svg>
      </TaskIcon>
      <TaskIcon label="记账" running>
        <svg viewBox="0 0 24 24" className="h-6 w-6"><rect width="24" height="24" rx="2" fill="#2f5bf5" /><path d="M6 4l6 7 6-7M5 12h14M5 16h14M12 11v10" fill="none" stroke="#d5f0ee" strokeWidth="2" /></svg>
      </TaskIcon>
      <TaskIcon label="Excel" className="bg-[#e4f6f0]" bar="w-4 bg-[#0b78d4]">
        <svg viewBox="0 0 24 24" className="h-6 w-6"><path d="M12 3h11v18H12z" fill="#fff" stroke="#1d6f42" /><path d="M14 6h3M18 6h4M14 9h3M18 9h4M14 12h3M18 12h4M14 15h3M18 15h4M14 18h3M18 18h4" stroke="#1d6f42" strokeWidth="1.500" /><path d="M0 3l14-3v24L0 21z" fill="#1d6f42" /><path d="M4 8l6 8M10 8l-6 8" stroke="#fff" strokeWidth="2" /></svg>
      </TaskIcon>
    </div>
    <div className="flex flex-1 items-center justify-end text-[15px]">
      <ChevronUp size={15} strokeWidth={2} className="mr-[15px]" />
      <svg viewBox="0 0 18 17" className="mr-[15px] h-[17px] w-[18px]" fill="none" stroke="#222" strokeWidth="1.300"><path d="M1 7C3 0 12-1 15 4V.5M15 5h-4M1 15.500V11h4M1 11.500c1 2 3 4 6 4" /><circle cx="13" cy="12" r="4.200" fill="#0b78d4" stroke="none" /></svg>
      <span className="mr-[23px]">中</span>
      <span className="mr-[22px]">拼</span>
      <svg viewBox="0 0 17 17" className="mr-[7px] h-[17px] w-[17px]" fill="none" stroke="#222" strokeWidth="1.200"><path d="M10 1.500H1v11h12V9M4 15.500h8M5.500 12.500v3M9.500 12.500v3M12 1.500h4v4.500h-4zM14 6v9" /></svg>
      <Volume2 size={18} strokeWidth={1.400} className="mr-[14px]" />
      <div className="pb-0.5 text-right text-[12px] leading-[15px]">14:23<br />2025/12/16</div>
    </div>
  </footer>
);

export default function App() {
  return (
    <div className="flex h-screen flex-col overflow-hidden bg-[#e6e6e6] font-['Open_Sans','Noto_Sans_CJK_SC',sans-serif] text-[12px] text-[#262626]">
      <TitleBar />
      <RibbonTabs />
      <Ribbon />
      <FormulaBar />
      <main className="flex min-h-0 flex-1">
        <Sheet />
        <VerticalScroll />
      </main>
      <SheetTabs />
      <StatusBar />
      <Taskbar />
    </div>
  );
}
